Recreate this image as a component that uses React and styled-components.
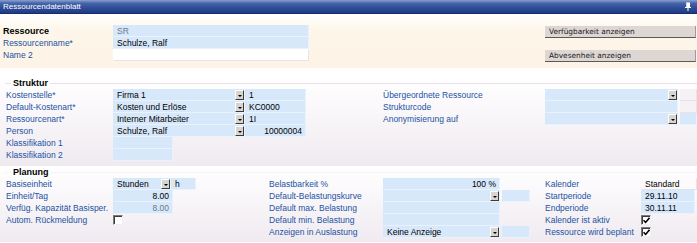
import React from 'react';
import styled, { createGlobalStyle } from 'styled-components';

const GlobalStyle = createGlobalStyle`
  html, body { margin: 0; padding: 0; background: #fff; }
  body {
    font-family: "Liberation Sans", Arial, sans-serif;
    font-size: 8.5px;
    color: #000;
  }
`;

const Sheet = styled.div`
  width: 697px;
  height: 243px;
  overflow: hidden;
  background: #fff;
`;

const TitleBar = styled.div`
  height: 13px;
  display: flex;
  align-items: center;
  justify-content: space-between;
  padding: 0 6px 0 3px;
  background: linear-gradient(#8aa0cf, #4664aa 25%, #2d4b95 65%, #1f3a84);
  border-bottom: 1px solid #162c6c;
  color: #fff;
  font-size: 8px;
`;

const TopPanel = styled.div`
  display: flex;
  padding: 11px 0 6px 3px;
  background: linear-gradient(#fff, #fef6ea 30%, #fdf3e6);
`;

const Band = styled.div`
  margin-top: ${p => p.$top}px;
  padding: 0 0 ${p => p.$bottom}px 5px;
  background: linear-gradient(#fff, #fbf9fb 30%, #efeaf0);
`;

const Group = styled.fieldset`
  margin: 0;
  padding: 0 0 0 1px;
  min-width: 0;
  border: none;
  border-top: 1px solid ${p => p.$line};
`;

const Legend = styled.legend`
  margin-left: 5px;
  padding: 0 2px;
  font-size: 9px;
  line-height: 11px;
  font-weight: bold;
  color: #000;
`;

const Grid = styled.div`
  display: grid;
  grid-template-columns: ${p => p.$cols};
  grid-auto-rows: 12px;
`;

const Label = styled.div`
  display: flex;
  align-items: center;
  white-space: nowrap;
  color: ${p => (p.$bold ? '#000' : '#2252a2')};
  font-weight: ${p => (p.$bold ? 'bold' : 'normal')};
  font-size: ${p => (p.$bold ? '9px' : '8.5px')};
  grid-column: ${p => p.$col || 'auto'};
`;

const tones = {
  blue: { bg: '#d7e8fb', border: '#eaf2fc' },
  white: { bg: '#fff', border: '#e6e3ea' },
  pale: { bg: '#f5f1f5', border: '#e7e1e8' },
  plain: { bg: 'transparent', border: '#e7e2e9' },
};

const Field = styled.div`
  box-sizing: border-box;
  height: 12px;
  width: ${p => (p.$w ? `${p.$w}px` : 'auto')};
  margin-left: ${p => p.$ml || 0}px;
  grid-column: ${p => p.$col || 'auto'};
  display: flex;
  align-items: center;
  justify-content: ${p => (p.$align === 'right' ? 'flex-end' : 'flex-start')};
  padding: 0 ${p => (p.$select ? 0 : 3)}px 0 3px;
  background: ${p => tones[p.$tone || 'blue'].bg};
  border: 1px solid ${p => tones[p.$tone || 'blue'].border};
  border-top-color: transparent;
  border-left-color: transparent;
  color: ${p => (p.$muted ? '#6b7a8c' : '#000')};
  white-space: nowrap;
  overflow: hidden;
`;

const FieldText = styled.span`
  flex: 1;
  overflow: hidden;
`;

const DropButton = styled.span`
  box-sizing: border-box;
  width: 9px;
  height: 10px;
  flex: none;
  display: flex;
  align-items: center;
  justify-content: center;
  background: #d8d5d0;
  border: 1px solid;
  border-color: #fff #3c3c3c #3c3c3c #fff;
  &::after {
    content: '';
    border-left: 2px solid transparent;
    border-right: 2px solid transparent;
    border-top: 2px solid #000;
    margin-top: 1px;
  }
`;

const Pair = styled.div`
  display: flex;
  grid-column: ${p => p.$col || 'auto'};
`;

const Box = styled.span`
  box-sizing: border-box;
  width: 10px;
  height: 10px;
  margin-top: 1px;
  grid-column: ${p => p.$col || 'auto'};
  background: #fff;
  border: 1px solid;
  border-color: #7a7a7a #f0f0f0 #f0f0f0 #7a7a7a;
  box-shadow: inset 1px 1px 0 #3d3d3d;
  display: flex;
  align-items: center;
  justify-content: center;
`;

const ButtonColumn = styled.div`
  display: flex;
  flex-direction: column;
  gap: 12px;
  padding-top: 1px;
  margin-left: 236px;
`;

const ActionButton = styled.div`
  box-sizing: border-box;
  width: 151px;
  height: 12px;
  display: flex;
  align-items: center;
  padding-left: 4px;
  background: #ddd6d3;
  border-bottom: 1px solid #5a5a5a;
  border-right: 1px solid #a09a98;
  font-family: "DejaVu Sans", Verdana, sans-serif;
  font-size: 7.4px;
  color: #1a1a1a;
`;

const Select = ({ children, ...rest }) => (
  <Field $select {...rest}>
    <FieldText>{children}</FieldText>
    <DropButton />
  </Field>
);

const Check = ({ checked, col }) => (
  <Box $col={col}>
    {checked && (
      <svg width="7" height="7" viewBox="0 0 7 7">
        <path d="M0.5 3.2 L2.6 5.4 L6.5 0.8" fill="none" stroke="#000" strokeWidth="1.6" />
      </svg>
    )}
  </Box>
);

const Pin = () => (
  <svg width="6" height="9" viewBox="0 0 6 9">
    <rect x="1" y="0.5" width="4" height="5" fill="#fff" />
    <rect x="1" y="0.5" width="1" height="5" fill="#c9d3ea" />
    <rect x="0" y="5" width="6" height="1" fill="#fff" />
    <rect x="2.5" y="6" width="1" height="3" fill="#fff" />
  </svg>
);

const STRUKTUR_COLS = '107px 132px 61px 77px 162px 133px 2px 17px';
const PLANUNG_COLS = '107px 60px 96px 114px 117px 45px 96px 56px';

export default function App() {
  return (
    <Sheet>
      <GlobalStyle />
      <TitleBar>
        <span>Ressourcendatenblatt</span>
        <Pin />
      </TitleBar>

      <TopPanel>
        <Grid $cols="110px 196px">
          <Label $bold>Ressource</Label>
          <Field $muted>SR</Field>
          <Label>Ressourcenname*</Label>
          <Field>Schulze, Ralf</Field>
          <Label>Name 2</Label>
          <Field $tone="white" />
        </Grid>
        <ButtonColumn>
          <ActionButton>Verfügbarkeit anzeigen</ActionButton>
          <ActionButton>Abvesenheit anzeigen</ActionButton>
        </ButtonColumn>
      </TopPanel>

      <Band $top={10} $bottom={5}>
        <Group $line="#ecdfea">
          <Legend>Struktur</Legend>
          <Grid $cols={STRUKTUR_COLS}>
            <Label>Kostenstelle*</Label>
            <Select>Firma 1</Select>
            <Field>1</Field>
            <Label $col="5">Übergeordnete Ressource</Label>
            <Select />
            <Field $tone="pale" $col="8" />

            <Label>Default-Kostenart*</Label>
            <Select>Kosten und Erlöse</Select>
            <Field>KC0000</Field>
            <Label $col="5">Strukturcode</Label>
            <Field />
            <Field $tone="pale" $col="8" />

            <Label>Ressourcenart*</Label>
            <Select>Interner Mitarbeiter</Select>
            <Field>1I</Field>
            <Label $col="5">Anonymisierung auf</Label>
            <Select />
            <Field $col="8" />

            <Label>Person</Label>
            <Select>Schulze, Ralf</Select>
            <Field $align="right">10000004</Field>

            <Label $col="1">Klassifikation 1</Label>
            <Field $w={60} />
            <Label $col="1">Klassifikation 2</Label>
            <Field $w={60} />
          </Grid>
        </Group>
      </Band>

      <Band $top={1} $bottom={4}>
        <Group $line="#f6f2f6">
          <Legend>Planung</Legend>
          <Grid $cols={PLANUNG_COLS}>
            <Label>Basiseinheit</Label>
            <Pair $col="2 / 4">
              <Select $w={58}>Stunden</Select>
              <Field $w={25}>h</Field>
            </Pair>
            <Label>Belastbarkeit %</Label>
            <Field $align="right">100 %</Field>
            <Label $col="7">Kalender</Label>
            <Field $tone="plain">Standard</Field>

            <Label>Einheit/Tag</Label>
            <Field $align="right">8.00</Field>
            <Label $col="4">Default-Belastungskurve</Label>
            <Select />
            <Field $w={28} $ml={2} />
            <Label>Startperiode</Label>
            <Field $w={54}>29.11.10</Field>

            <Label>Verfüg. Kapazität Basisper.</Label>
            <Field $align="right" $muted>8.00</Field>
            <Label $col="4">Default max. Belastung</Label>
            <Field />
            <Label $col="7">Endperiode</Label>
            <Field $w={54}>30.11.11</Field>

            <Label>Autom. Rückmeldung</Label>
            <Check />
            <Label $col="4">Default min. Belastung</Label>
            <Field />
            <Label $col="7">Kalender ist aktiv</Label>
            <Check checked />

            <Label $col="4">Anzeigen in Auslastung</Label>
            <Select>Keine Anzeige</Select>
            <Field $w={28} $ml={2} />
            <Label>Ressource wird beplant</Label>
            <Check checked />
          </Grid>
        </Group>
      </Band>
    </Sheet>
  );
}
